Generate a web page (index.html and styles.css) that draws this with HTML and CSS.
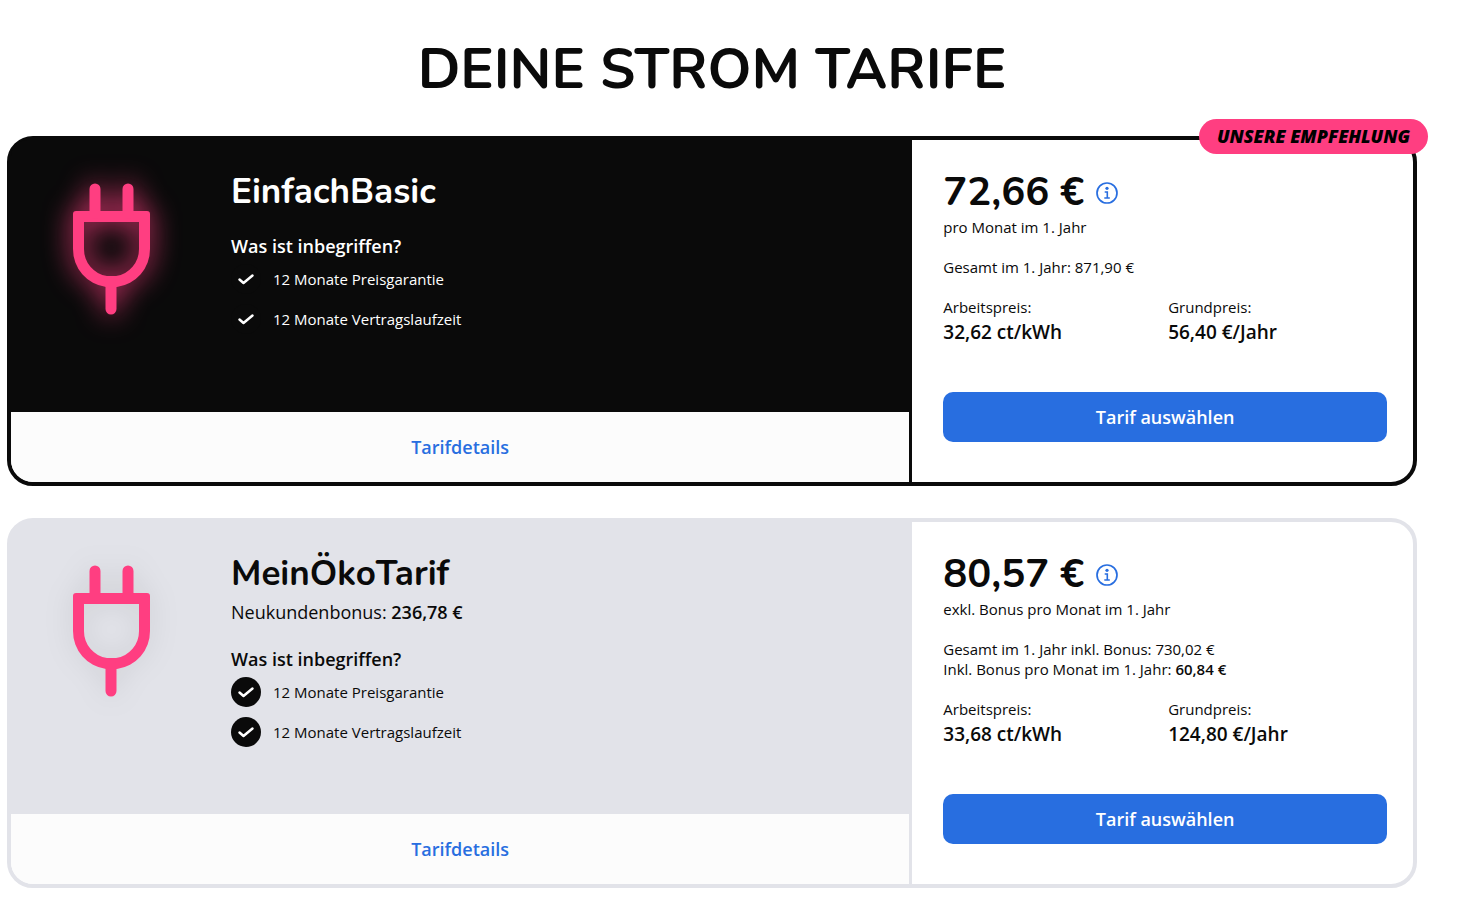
FILE: index.html
```html
<!DOCTYPE html>
<html lang="de">
<head>
    <meta charset="UTF-8">
    <meta name="viewport" content="width=device-width, initial-scale=1.0">
    <title>Deine Strom Tarife</title>
    <link rel="stylesheet" href="styles.css">
</head>
<body>
    <!-- shared icons -->
    <svg class="sprite" aria-hidden="true">
        <symbol id="plug" viewBox="0 0 100 150">
            <path fill-rule="evenodd" d="M15 36H86a3 3 0 0 1 3 3V74A38 38 0 0 1 56 112H45A38 38 0 0 1 12 74V39a3 3 0 0 1 3-3ZM23 47V74A27 27 0 0 0 46 101H55A27 27 0 0 0 78 74V47Z"/>
            <path d="M34 14V38M67 14V38M50 108V134" fill="none" stroke="currentColor" stroke-width="11" stroke-linecap="round"/>
        </symbol>
        <symbol id="check" viewBox="0 0 30 30">
            <path d="M8.5 15.5L12.5 19L21.5 11.5" fill="none" stroke="currentColor" stroke-width="2.5" stroke-linecap="round" stroke-linejoin="round"/>
        </symbol>
        <symbol id="info" viewBox="0 0 22 22">
            <circle cx="11" cy="11" r="10" fill="none" stroke="currentColor" stroke-width="1.7"/>
            <circle cx="11" cy="6.3" r="1.6"/>
            <path d="M8.7 10H11.3V16M8.3 16H13.8" fill="none" stroke="currentColor" stroke-width="1.6"/>
        </symbol>
    </svg>

    <main class="tarife">
        <h1>DEINE STROM TARIFE</h1>

        <section class="card dark">
            <div class="badge">UNSERE EMPFEHLUNG</div>
            <div class="left">
                <div class="info">
                    <svg class="plug"><use href="#plug"/></svg>
                    <div class="text">
                        <h2>EinfachBasic</h2>
                        <h3>Was ist inbegriffen?</h3>
                        <ul>
                            <li><svg class="check"><use href="#check"/></svg>12 Monate Preisgarantie</li>
                            <li><svg class="check"><use href="#check"/></svg>12 Monate Vertragslaufzeit</li>
                        </ul>
                    </div>
                </div>
                <div class="details"><a href="#">Tarifdetails</a></div>
            </div>
            <div class="right">
                <div class="price">72,66 €
                    <button class="info-btn" type="button" aria-label="Info"><svg><use href="#info"/></svg></button>
                </div>
                <p>pro Monat im 1. Jahr</p>
                <p class="total">Gesamt im 1. Jahr: 871,90 €</p>
                <dl>
                    <div><dt>Arbeitspreis:</dt><dd>32,62 ct/kWh</dd></div>
                    <div><dt>Grundpreis:</dt><dd>56,40 €/Jahr</dd></div>
                </dl>
                <button class="select" type="button">Tarif auswählen</button>
            </div>
        </section>

        <section class="card light">
            <div class="left">
                <div class="info">
                    <svg class="plug"><use href="#plug"/></svg>
                    <div class="text">
                        <h2>MeinÖkoTarif</h2>
                        <p class="bonus">Neukundenbonus: <b>236,78 €</b></p>
                        <h3>Was ist inbegriffen?</h3>
                        <ul>
                            <li><svg class="check"><use href="#check"/></svg>12 Monate Preisgarantie</li>
                            <li><svg class="check"><use href="#check"/></svg>12 Monate Vertragslaufzeit</li>
                        </ul>
                    </div>
                </div>
                <div class="details"><a href="#">Tarifdetails</a></div>
            </div>
            <div class="right">
                <div class="price">80,57 €
                    <button class="info-btn" type="button" aria-label="Info"><svg><use href="#info"/></svg></button>
                </div>
                <p>exkl. Bonus pro Monat im 1. Jahr</p>
                <p class="total">Gesamt im 1. Jahr inkl. Bonus: 730,02 €<br>Inkl. Bonus pro Monat im 1. Jahr: <b>60,84 €</b></p>
                <dl>
                    <div><dt>Arbeitspreis:</dt><dd>33,68 ct/kWh</dd></div>
                    <div><dt>Grundpreis:</dt><dd>124,80 €/Jahr</dd></div>
                </dl>
                <button class="select" type="button">Tarif auswählen</button>
            </div>
        </section>
    </main>
</body>
</html>
```
FILE: styles.css
```css
*{
    margin: 0;
    padding: 0;
    box-sizing: border-box;
}
body{
    background: white;
    color: #0a0a0a;
    font-family: 'Open Sans', sans-serif;
    font-size: 15px;
    line-height: 20px;
}
.sprite{
    position: absolute;
    width: 0;
    height: 0;
}
.tarife{
    padding: 34px 66px 20px 7px;
}
h1, h2, .price{
    font-family: Nunito, Lato, sans-serif;
    font-weight: 700;
}
h1{
    font-size: 56px;
    line-height: 72px;
    text-align: center;
    margin-bottom: 30px;
}
b{
    font-weight: 600;
}
.card{
    position: relative;
    display: grid;
    grid-template-columns: 9fr 5fr;
    border: 4px solid var(--tone);
    border-radius: 26px;
    margin-bottom: 32px;
}
.dark{
    --tone: #0a0a0a;
    --text: white;
    --glow: #ff3e81;
}
.light{
    --tone: #e2e3e9;
    --text: #0a0a0a;
    --glow: rgba(10, 10, 10, 0.1);
}
.badge{
    position: absolute;
    top: -21px;
    right: -15px;
    padding: 0 18px;
    border-radius: 18px;
    background: #ff3e81;
    color: black;
    font-size: 18px;
    font-weight: 800;
    font-style: italic;
    line-height: 35px;
}
.left{
    display: flex;
    flex-direction: column;
    border-right: 3px solid var(--tone);
}
.info{
    flex: 1;
    display: flex;
    gap: 20px;
    padding-top: 30px;
    border-radius: 16px 0 0 0;
    background: var(--tone);
    color: var(--text);
}
.plug{
    width: 200px;
    height: 150px;
    margin-top: 5px;
    color: #ff3e81;
    fill: currentColor;
    filter: drop-shadow(0 0 14px var(--glow));
}
h2{
    font-size: 35px;
    line-height: 44px;
}
h3{
    font-size: 18px;
    font-weight: 600;
    line-height: 24px;
    margin: 20px 0 6px;
}
.bonus{
    font-size: 18px;
    line-height: 24px;
    margin: 4px 0 23px;
}
ul{
    display: grid;
    gap: 10px;
    list-style: none;
}
li{
    display: flex;
    align-items: center;
    gap: 12px;
}
.check{
    width: 30px;
    height: 30px;
    border-radius: 50%;
    background: #0a0a0a;
    color: white;
}
.details{
    height: 70px;
    display: flex;
    justify-content: center;
    align-items: center;
    border-radius: 0 0 0 22px;
    background: #fcfcfc;
}
.details a{
    color: #286ee0;
    font-size: 18px;
    font-weight: 600;
    text-decoration: none;
}
.right{
    padding: 28px 26px 40px 31px;
}
.price{
    display: flex;
    align-items: center;
    gap: 12px;
    font-size: 40px;
    line-height: 49px;
}
.info-btn{
    display: flex;
    border: none;
    background: none;
    color: #286ee0;
    cursor: pointer;
}
.info-btn svg{
    width: 22px;
    height: 22px;
    fill: currentColor;
}
.total{
    margin: 20px 0;
}
dl{
    display: grid;
    grid-template-columns: 1fr 1fr;
    gap: 6px;
    margin-bottom: 45px;
}
dd{
    font-size: 19px;
    font-weight: 600;
    line-height: 30px;
}
.select{
    display: block;
    width: 100%;
    height: 50px;
    border: none;
    border-radius: 10px;
    background: #286ee0;
    color: white;
    font-family: inherit;
    font-size: 18px;
    font-weight: 600;
    cursor: pointer;
}
```
